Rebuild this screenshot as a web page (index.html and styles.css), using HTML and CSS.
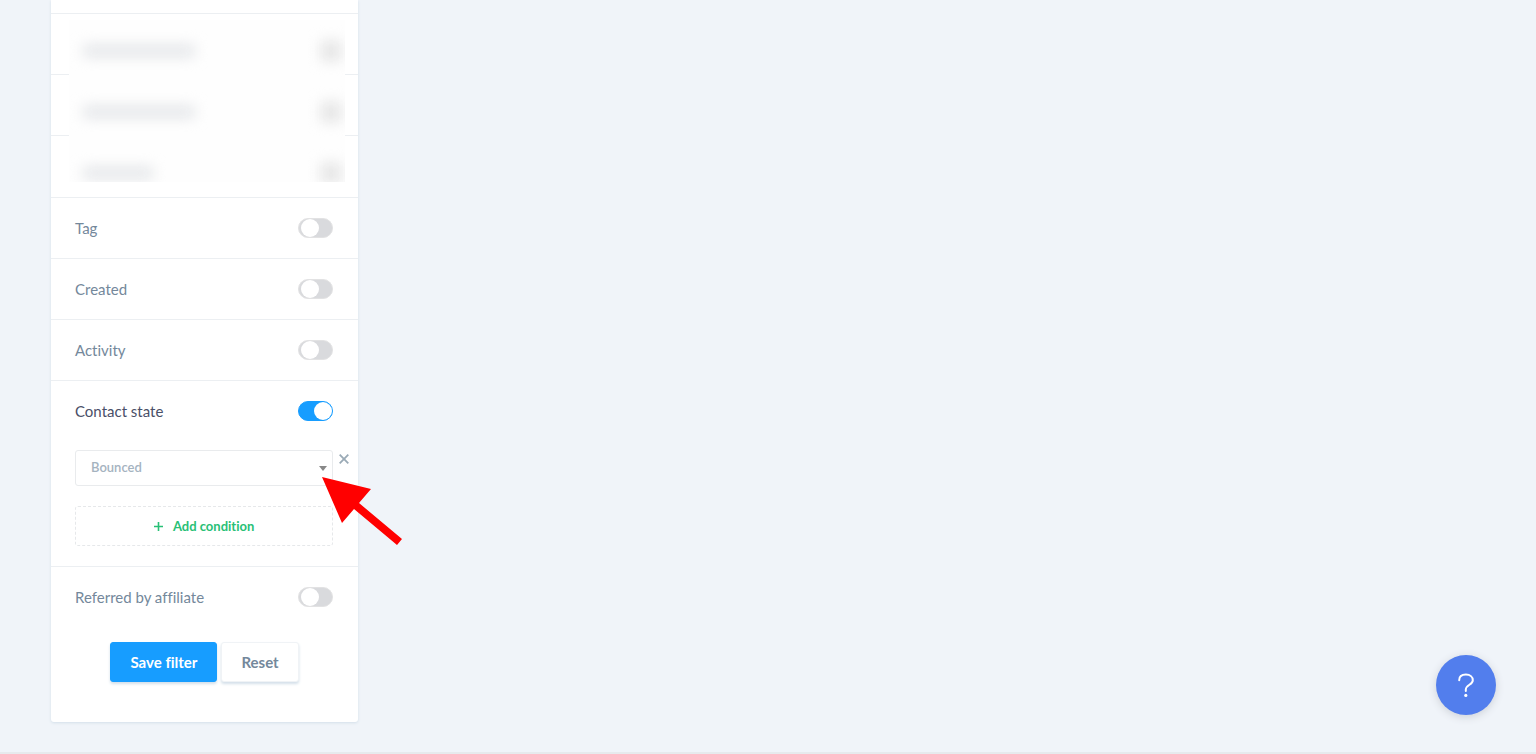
FILE: index.html
```html
<!DOCTYPE html>
<html lang="en">
<head>
<meta charset="utf-8">
<title>Contact filter</title>
<link rel="stylesheet" href="styles.css">
</head>
<body>
<main class="page">
  <form class="card">
    <div class="hidden-rows">
      <div class="hidden-row"></div>
      <div class="hidden-row"></div>
      <div class="hidden-row"></div>
      <div class="veil" aria-hidden="true">
        <div class="veil-row"><span class="smudge"></span><span class="smudge-dot"></span></div>
        <div class="veil-row"><span class="smudge"></span><span class="smudge-dot"></span></div>
        <div class="veil-row"><span class="smudge smudge-short"></span><span class="smudge-dot"></span></div>
      </div>
    </div>
    <div class="filter">
      <label class="filter-label" for="tag">Tag</label>
      <input class="toggle" type="checkbox" id="tag">
    </div>
    <div class="filter">
      <label class="filter-label" for="created">Created</label>
      <input class="toggle" type="checkbox" id="created">
    </div>
    <div class="filter">
      <label class="filter-label" for="activity">Activity</label>
      <input class="toggle" type="checkbox" id="activity">
    </div>
    <div class="filter">
      <label class="filter-label filter-label-on" for="state">Contact state</label>
      <input class="toggle" type="checkbox" id="state" checked>
    </div>
    <div class="conditions">
      <div class="condition">
        <select class="select" aria-label="Contact state value"><option>Bounced</option></select>
        <svg class="caret" width="8" height="5" viewBox="0 0 8 5"><path d="M0 0H8L4 5Z" fill="#888"/></svg>
        <button class="remove" type="button" aria-label="Remove condition">
          <svg class="icon" width="10" height="10" viewBox="0 0 10 10"><path d="M.7 .7L9.300 9.300M9.300 .7L.7 9.300" stroke="#9aaab6" stroke-width="1.800" fill="none"/></svg>
        </button>
        <svg class="pointer" width="81" height="69" viewBox="0 0 81 69"><path d="M0 0L49 12L37 26L80 62L75 68L32 32L20 46Z" fill="#f00"/></svg>
      </div>
      <button class="add" type="button">
        <svg class="icon" width="9" height="9" viewBox="0 0 9 9"><path d="M4.5 0V9M0 4.5H9" stroke="#28c076" stroke-width="1.6" fill="none"/></svg>
        Add condition
      </button>
    </div>
    <div class="filter">
      <label class="filter-label" for="affiliate">Referred by affiliate</label>
      <input class="toggle" type="checkbox" id="affiliate">
    </div>
    <div class="actions">
      <button class="button button-primary" type="button">Save filter</button>
      <button class="button" type="button">Reset</button>
    </div>
  </form>
</main>
<footer class="footer"></footer>
<button class="help" type="button" aria-label="Help">
  <svg class="icon" width="18" height="26" viewBox="0 0 18 26"><path d="M2.200 8.200C2.200 4.500 4.800 2.600 8.900 2.600C13.200 2.600 15.800 4.900 15.800 8.200C15.800 13.200 8.800 12.300 8.800 17.800V19" stroke="#fff" stroke-width="2" stroke-linecap="round" fill="none"/><circle cx="8.800" cy="23.400" r="1.600" fill="#fff"/></svg>
</button>
</body>
</html>
```
FILE: styles.css
```css
* { box-sizing: border-box; }

body {
  margin: 0;
  min-height: 100vh;
  display: flex;
  flex-direction: column;
  background: #f0f4f9;
  color: #74889b;
  font: 15px/20px Lato, "Open Sans", sans-serif;
  font-variant-ligatures: none;
}

button, select { font-variant-ligatures: none; }

.page { flex: 1; padding: 0 51px 30px; }

.card {
  width: 20vw;
  min-width: 300px;
  padding-top: 13px;
  background: #fff;
  border-radius: 0 0 3px 3px;
  box-shadow: 0 1px 3px #d3dfe9;
}

.hidden-rows { position: relative; padding-bottom: 1px; }
.hidden-row { height: 61px; border-top: 1px solid #eceff2; }

.veil {
  position: absolute;
  inset: 7px 13px 15px 18px;
  overflow: hidden;
  background: #fefefe;
}
.veil-row {
  height: 61px;
  padding: 0 4px 0 14px;
  display: flex;
  align-items: center;
  justify-content: space-between;
}
.smudge {
  width: 112px;
  height: 12px;
  background: #e3e5e8;
  filter: blur(7px);
}
.smudge-short { width: 70px; }
.smudge-dot {
  width: 20px;
  height: 20px;
  background: #e4e4e4;
  filter: blur(7px);
}

.filter {
  height: 61px;
  padding: 0 25px 0 24px;
  display: flex;
  align-items: center;
  justify-content: space-between;
  border-top: 1px solid #eceff2;
}
.filter-label-on { color: #4a4f68; }

.toggle {
  appearance: none;
  width: 35px;
  height: 20px;
  margin: 0;
  padding-left: 2px;
  display: flex;
  border: 1px solid #e2e2e3;
  border-radius: 10px;
  background: #d9dadd;
}
.toggle::before {
  content: "";
  width: 18px;
  height: 18px;
  border-radius: 50%;
  background: #fff;
}
.toggle:checked {
  justify-content: flex-end;
  border-color: #179dff;
  background: #179dff;
}

.conditions {
  padding: 9px 25px 20px 24px;
  display: grid;
  gap: 20px;
}
.condition { position: relative; }
.select {
  appearance: none;
  display: block;
  width: 100%;
  height: 36px;
  padding: 0 15px 2px;
  border: 1px solid #e9ebed;
  border-radius: 3px;
  background: #fff;
  color: #a5b3bf;
  font: 600 13px/20px Lato, "Open Sans", sans-serif;
}
.caret { position: absolute; top: 16px; right: 6px; }
.remove {
  position: absolute;
  top: 4px;
  right: -16px;
  padding: 0;
  border: 0;
  background: none;
}
.pointer { position: absolute; top: 27px; right: -70px; z-index: 1; }
.icon { display: block; }

.add {
  height: 40px;
  padding: 0;
  display: flex;
  align-items: center;
  justify-content: center;
  gap: 10px;
  border: 1px dashed #e6e8ea;
  border-radius: 3px;
  background: #fff;
  color: #28c076;
  font: 700 13px/20px Lato, "Open Sans", sans-serif;
  font-variant-ligatures: none;
}

.actions {
  padding: 15px 0 40px;
  display: flex;
  justify-content: center;
  gap: 4px;
}
.button {
  height: 40px;
  padding: 0 19px;
  border: 1px solid #f0f3f6;
  border-radius: 3px;
  background: #fff;
  box-shadow: 0 2px 3px #d3dfe9;
  color: #74889b;
  font: 700 15px/20px Lato, "Open Sans", sans-serif;
  font-variant-ligatures: none;
}
.button-primary { border-color: #179dff; background: #179dff; color: #fff; }

.footer { height: 2px; background: #e7eaed; }

.help {
  position: fixed;
  right: 40px;
  bottom: 39px;
  width: 60px;
  height: 60px;
  padding: 0;
  display: grid;
  place-items: center;
  border: 0;
  border-radius: 50%;
  background: #527eed;
  box-shadow: 0 2px 8px #cdd1d8;
}
```
